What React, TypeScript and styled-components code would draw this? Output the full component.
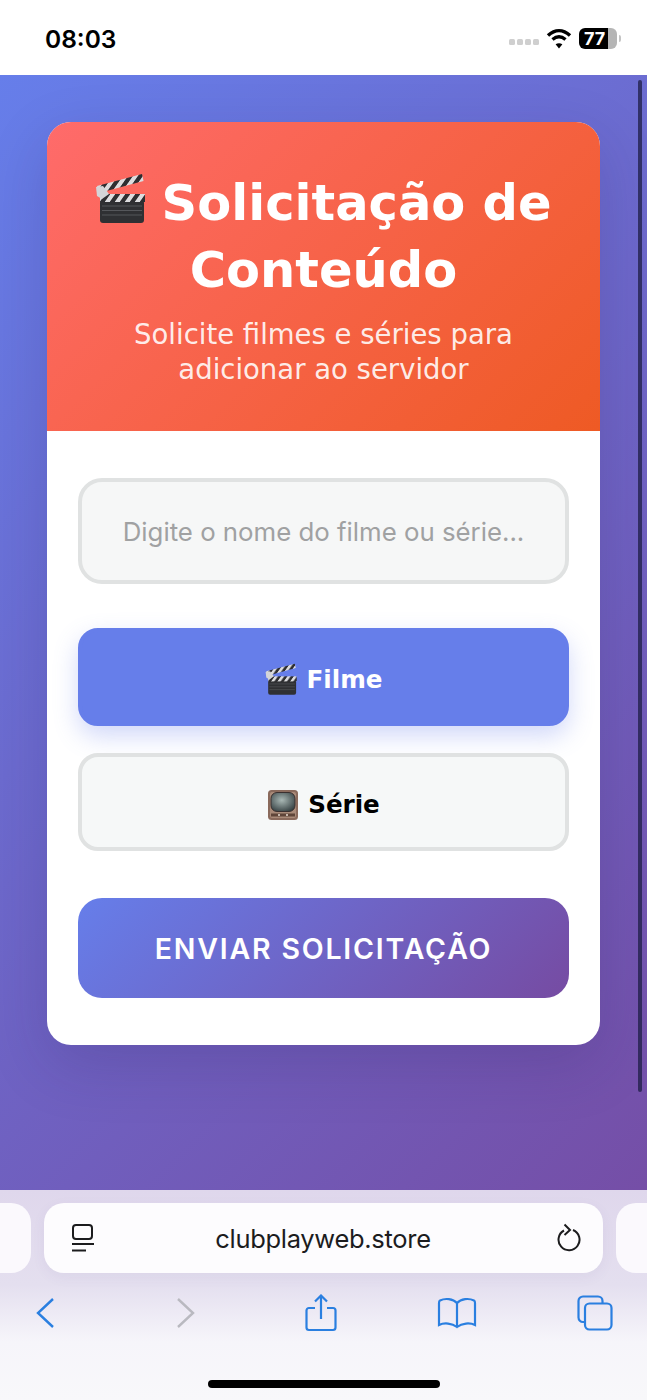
import styled, { createGlobalStyle } from "styled-components";

const GlobalStyle = createGlobalStyle`
  html, body {
    margin: 0;
    padding: 0;
    background: #fff;
  }
  * {
    box-sizing: border-box;
  }
`;

const Screen = styled.div`
  width: 647px;
  height: 1400px;
  display: flex;
  flex-direction: column;
  overflow: hidden;
  position: relative;
`;

const StatusBar = styled.div`
  height: 75px;
  flex: none;
  background: #fff;
  display: flex;
  align-items: center;
  justify-content: space-between;
  padding: 2px 30px 0 45px;
`;

const Clock = styled.span`
  font-family: Inter, "Liberation Sans", sans-serif;
  font-size: 24.5px;
  font-weight: 600;
  color: #000;
`;

const StatusIcons = styled.div`
  display: flex;
  align-items: center;
  gap: 7px;
`;

const SignalDots = styled.div`
  display: flex;
  gap: 1.5px;
  margin-top: 7px;
  margin-right: 0;
`;

const SignalDot = styled.i`
  width: 6.500px;
  height: 6.500px;
  border-radius: 1.500px;
  background: #cfcfcf;
`;

const Battery = styled.div`
  width: 38px;
  height: 21px;
  border-radius: 6px;
  background: linear-gradient(to right, #000 76%, #b5b5b5 76%);
  color: #fff;
  font-family: Inter, "Liberation Sans", sans-serif;
  font-size: 18px;
  font-weight: 700;
  line-height: 21px;
  padding-left: 5px;
  position: relative;
  &::after {
    content: "";
    position: absolute;
    right: -4px;
    top: 7px;
    width: 2px;
    height: 7px;
    border-radius: 0 2px 2px 0;
    background: #c4c4c4;
  }
`;

const Page = styled.main`
  flex: 1;
  background: linear-gradient(135deg, #667eea 0%, #764ba2 100%) no-repeat;
  background-size: 100% 1235px;
  padding: 47px 47px 0;
  position: relative;
`;

const Scrollbar = styled.div`
  position: absolute;
  top: 5px;
  right: 5px;
  width: 4px;
  height: 1012px;
  border-radius: 2px;
  background: rgba(30, 30, 70, 0.75);
`;

const Card = styled.section`
  height: 923px;
  background: #fff;
  border-radius: 24px;
  overflow: hidden;
  box-shadow: 0 20px 60px rgba(40, 30, 90, 0.18);
`;

const CardHeader = styled.header`
  height: 309px;
  padding: 48px 30px 0;
  background: linear-gradient(135deg, #ff6b6b, #ee5a24);
  color: #fff;
  text-align: center;
  font-family: "DejaVu Sans", sans-serif;
`;

const Title = styled.h1`
  margin: 0;
  font-size: 49.500px;
  line-height: 67px;
  font-weight: 700;
  svg {
    vertical-align: -5px;
    margin-right: -3px;
  }
`;

const Subtitle = styled.p`
  margin: 13px 0 0;
  font-size: 27.500px;
  line-height: 35px;
  color: rgba(255, 255, 255, 0.9);
`;

const CardBody = styled.div`
  padding: 47px 31px 0;
  display: flex;
  flex-direction: column;
`;

const SearchInput = styled.input`
  height: 106px;
  width: 100%;
  border: 4px solid #e0e2e2;
  border-radius: 24px;
  background: #f6f7f7;
  text-align: center;
  font-family: Inter, "Liberation Sans", sans-serif;
  font-size: 25.800px;
  outline: none;
  &::placeholder {
    color: #a0a1a2;
    opacity: 1;
  }
`;

const TypeOptions = styled.div`
  margin-top: 44px;
  display: flex;
  flex-direction: column;
  gap: 27px;
`;

const TypeButton = styled.button<{ $active?: boolean }>`
  height: 98px;
  width: 100%;
  padding: 5px 0 0;
  border-radius: 20px;
  border: 4px solid ${(p) => (p.$active ? "#667eea" : "#e0e2e2")};
  background: ${(p) => (p.$active ? "#667eea" : "#f6f8f8")};
  color: ${(p) => (p.$active ? "#fff" : "#000")};
  box-shadow: ${(p) => (p.$active ? "0 10px 25px rgba(102, 126, 234, 0.3)" : "none")};
  font-family: "DejaVu Sans", sans-serif;
  font-size: 24.600px;
  font-weight: 700;
  display: flex;
  align-items: center;
  justify-content: center;
  gap: 9px;
`;

const SubmitButton = styled.button`
  margin-top: 47px;
  height: 100px;
  width: 100%;
  border: 0;
  border-radius: 24px;
  background: linear-gradient(135deg, #667eea, #764ba2);
  color: #fff;
  font-family: Inter, "Liberation Sans", sans-serif;
  font-size: 28.500px;
  font-weight: 600;
  letter-spacing: 1.800px;
`;

const BrowserBar = styled.footer`
  height: 210px;
  flex: none;
  background: linear-gradient(to bottom, #dfd7ec 0%, #e4dfef 45%, #f6f5fa 72%, #f8f8fa 100%);
  padding-top: 13px;
  position: relative;
`;

const TabRow = styled.div`
  display: grid;
  grid-template-columns: 31px 559px 31px;
  gap: 13px;
`;

const SideTab = styled.div<{ $side: "left" | "right" }>`
  height: 70px;
  background: #fbf9fd;
  border-radius: ${(p) => (p.$side === "left" ? "0 20px 20px 0" : "20px 0 0 20px")};
`;

const AddressPill = styled.div`
  height: 70px;
  background: #fdfcfe;
  border-radius: 20px;
  box-shadow: 0 4px 14px rgba(90, 70, 140, 0.06);
  display: flex;
  align-items: center;
  justify-content: space-between;
  padding: 0 22px 0 27px;
`;

const Url = styled.span`
  font-family: Inter, "Liberation Sans", sans-serif;
  font-size: 25.500px;
  color: #1c1c1e;
  letter-spacing: -0.3px;
  margin-right: 4px;
`;

const ToolRow = styled.nav`
  margin-top: 21px;
  padding-left: 35px;
  display: flex;
  align-items: center;
`;

const ToolIcon = styled.svg<{ $gap?: number }>`
  flex: none;
  margin-left: ${(p) => p.$gap ?? 0}px;
`;

const HomeIndicator = styled.div`
  position: absolute;
  left: 208px;
  bottom: 12px;
  width: 232px;
  height: 8px;
  border-radius: 4px;
  background: #000;
`;

const ClapperEmoji = ({ size }: { size: number }) => (
  <svg width={size} height={size} viewBox="0 0 52 52">
    <defs>
      <pattern id="stripes" width="10" height="10" patternUnits="userSpaceOnUse" patternTransform="skewX(-35)">
        <rect width="10" height="10" fill="#2e2e31" />
        <rect width="5" height="10" fill="#dcdcde" />
      </pattern>
    </defs>
    <rect x="5" y="27" width="44" height="23" rx="3" fill="#2f3033" />
    <path d="M7 33h40M7 37.500h40M7 42h40" stroke="#55575b" strokeWidth="1" />
    <rect x="5" y="21" width="45" height="8" fill="url(#stripes)" />
    <path d="M2 13L47 1l1.500 7L4 20z" fill="url(#stripes)" />
    <path d="M1 14l7-1 6 8-7 5-5-3z" fill="#d4d5d8" />
  </svg>
);

const TvEmoji = ({ size }: { size: number }) => (
  <svg width={size} height={size} viewBox="0 0 32 32">
    <defs>
      <radialGradient id="screen" cx="45%" cy="40%" r="70%">
        <stop offset="0" stopColor="#a9b8b5" />
        <stop offset="1" stopColor="#2f3a3c" />
      </radialGradient>
    </defs>
    <rect x="1" y="1" width="30" height="30" rx="3.500" fill="#8a6a5c" />
    <rect x="3" y="3" width="26" height="26" rx="2" fill="#a98a78" />
    <rect x="4" y="3.500" width="24" height="19" rx="6" fill="url(#screen)" stroke="#3a3030" strokeWidth="1" />
    <rect x="4" y="24.500" width="24" height="3" fill="#5f4539" />
    <circle cx="12" cy="26" r="1" fill="#e7dcd2" />
    <circle cx="20" cy="26" r="1" fill="#e7dcd2" />
  </svg>
);

const BLUE = "#2a7fe0";

const App = () => {
  return (
    <Screen>
      <GlobalStyle />
      <StatusBar>
        <Clock>08:03</Clock>
        <StatusIcons>
          <SignalDots>
            <SignalDot />
            <SignalDot />
            <SignalDot />
            <SignalDot />
          </SignalDots>
          <svg width="26" height="21" viewBox="0 0 26 21" fill="none" stroke="#000" strokeWidth="3.400">
            <path d="M2 7.500C9 1 17 1 24 7.500" />
            <path d="M6.500 11.500c4.200-3.600 8.800-3.600 13 0" />
            <path d="M13 20.500l-3.400-4.200c2.200-1.400 4.600-1.400 6.800 0z" fill="#000" stroke="none" />
          </svg>
          <Battery>77</Battery>
        </StatusIcons>
      </StatusBar>

      <Page>
        <Scrollbar />
        <Card>
          <CardHeader>
            <Title>
              <ClapperEmoji size={52} /> Solicitação de Conteúdo
            </Title>
            <Subtitle>Solicite filmes e séries para adicionar ao servidor</Subtitle>
          </CardHeader>
          <CardBody>
            <SearchInput placeholder="Digite o nome do filme ou série..." />
            <TypeOptions>
              <TypeButton $active>
                <ClapperEmoji size={33} /> Filme
              </TypeButton>
              <TypeButton>
                <TvEmoji size={32} /> Série
              </TypeButton>
            </TypeOptions>
            <SubmitButton>ENVIAR SOLICITAÇÃO</SubmitButton>
          </CardBody>
        </Card>
      </Page>

      <BrowserBar>
        <TabRow>
          <SideTab $side="left" />
          <AddressPill>
            <svg width="24" height="28" viewBox="0 0 24 28" fill="none" stroke="#1c1c1e" strokeWidth="2">
              <rect x="2" y="1" width="19" height="14" rx="3" />
              <path d="M1 20h22M1 26.500h14" />
            </svg>
            <Url>clubplayweb.store</Url>
            <svg width="26" height="30" viewBox="0 0 26 30" fill="none" stroke="#1c1c1e" strokeWidth="2">
              <path d="M9 7.500A10.500 10.500 0 1 0 18 7" />
              <path d="M9.500 1.500l5.500 5.500-5.500 5" />
            </svg>
          </AddressPill>
          <SideTab $side="right" />
        </TabRow>
        <ToolRow>
          <ToolIcon width="20" height="32" viewBox="0 0 20 32" fill="none" stroke={BLUE} strokeWidth="2.400">
            <path d="M18 2L3 16l15 14" />
          </ToolIcon>
          <ToolIcon $gap={121} width="20" height="32" viewBox="0 0 20 32" fill="none" stroke="#b9b9c0" strokeWidth="2.400">
            <path d="M2 2l15 14L2 30" />
          </ToolIcon>
          <ToolIcon $gap={109} width="32" height="38" viewBox="0 0 32 38" fill="none" stroke={BLUE} strokeWidth="2.200">
            <path d="M10 14H4a2.500 2.500 0 0 0-2.500 2.500v17A2.500 2.500 0 0 0 4 36h24a2.500 2.500 0 0 0 2.500-2.500v-17A2.500 2.500 0 0 0 28 14h-6" />
            <path d="M16 25V2M10 7.500l6-6 6 6" />
          </ToolIcon>
          <ToolIcon $gap={100} width="40" height="32" viewBox="0 0 40 32" fill="none" stroke={BLUE} strokeWidth="2.200">
            <path d="M20 6C16 1.500 8 1 3 3.500 2 4 2 5 2 6v22c5-2.500 13-2 18 2 5-4 13-4.500 18-2V6c0-1 0-2-1-2.500C32 1 24 1.500 20 6z" />
            <path d="M20 6v24" />
          </ToolIcon>
          <ToolIcon $gap={100} width="36" height="36" viewBox="0 0 36 36" fill="none" stroke={BLUE} strokeWidth="2.200">
            <path d="M8 27H6a4.500 4.500 0 0 1-4.500-4.500V6A4.500 4.500 0 0 1 6 1.500h15A4.500 4.500 0 0 1 25.500 6v2" />
            <rect x="8" y="8.500" width="26.500" height="26" rx="4.500" />
          </ToolIcon>
        </ToolRow>
        <HomeIndicator />
      </BrowserBar>
    </Screen>
  );
};

export default App;
